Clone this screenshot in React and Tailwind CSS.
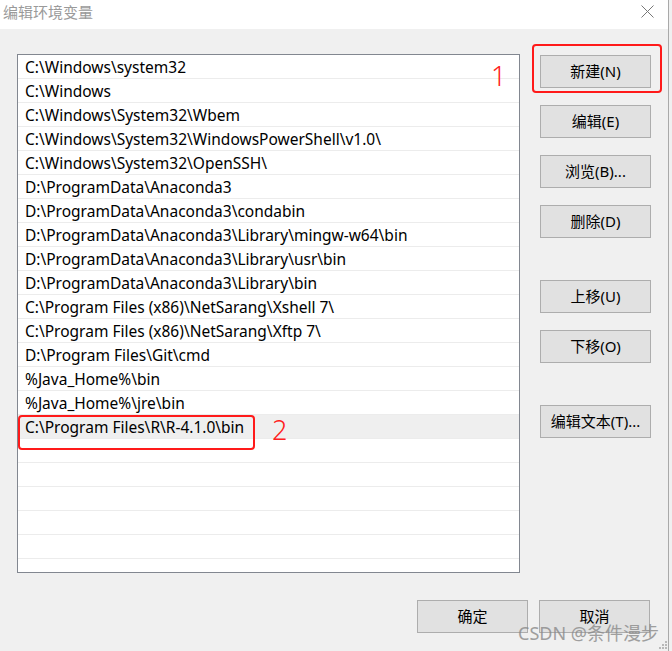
import React from "react";

const paths = [
  "C:\\Windows\\system32",
  "C:\\Windows",
  "C:\\Windows\\System32\\Wbem",
  "C:\\Windows\\System32\\WindowsPowerShell\\v1.0\\",
  "C:\\Windows\\System32\\OpenSSH\\",
  "D:\\ProgramData\\Anaconda3",
  "D:\\ProgramData\\Anaconda3\\condabin",
  "D:\\ProgramData\\Anaconda3\\Library\\mingw-w64\\bin",
  "D:\\ProgramData\\Anaconda3\\Library\\usr\\bin",
  "D:\\ProgramData\\Anaconda3\\Library\\bin",
  "C:\\Program Files (x86)\\NetSarang\\Xshell 7\\",
  "C:\\Program Files (x86)\\NetSarang\\Xftp 7\\",
  "D:\\Program Files\\Git\\cmd",
  "%Java_Home%\\bin",
  "%Java_Home%\\jre\\bin",
  "C:\\Program Files\\R\\R-4.1.0\\bin",
  "",
  "",
  "",
  "",
  "",
  "",
];

const font = {
  fontFamily: '"Noto Sans", "Noto Sans CJK SC", sans-serif',
};

function WinButton({ children, className = "" }) {
  return (
    <button
      className={`w-[111px] h-[33px] bg-[#e1e1e1] border border-[#adadad] text-[15px] text-black flex items-center justify-center ${className}`}
    >
      {children}
    </button>
  );
}

export default function App() {
  return (
    <div
      className="relative w-[672px] h-[651px] bg-[#f0f0f0] flex overflow-hidden"
      style={font}
    >
      <div className="w-[669px] h-full flex flex-col border-r border-[#a9a9a9]">
        {/* Title bar */}
        <div className="h-[29px] bg-white flex items-start justify-between shrink-0">
          <span className="pl-[3px] pt-[1px] text-[15px] leading-[22px] text-[#9a9a9a]">
            编辑环境变量
          </span>
          <svg
            className="mt-[5px] mr-[14px]"
            width="13"
            height="13"
            viewBox="0 0 13 13"
          >
            <path d="M0.5 0.5L12.5 12.5M12.5 0.5L0.5 12.5" stroke="#777" strokeWidth="1" fill="none" />
          </svg>
        </div>

        {/* Body */}
        <div className="flex pt-[25px] pl-[17px]">
          {/* List */}
          <div className="relative w-[503px] h-[519px] bg-white border border-[#828790] overflow-hidden">
            {paths.map((p, i) => (
              <div
                key={i}
                className={`h-[24px] border-b border-[#ececec] pl-[7px] pt-[2px] text-[15.5px] leading-[21px] text-black whitespace-nowrap ${
                  i === 15 ? "bg-[#efefef]" : ""
                }`}
              >
                {p}
              </div>
            ))}
            {/* annotation 2 */}
            <div className="absolute left-0 top-[360px] w-[237px] h-[35px] border-2 border-[#ff1a1a] rounded-[4px]" />
            <span className="absolute left-[254px] top-[357px] text-[27px] leading-[36px] text-[#ff2020] font-light">
              2
            </span>
            {/* annotation 1 */}
            <span className="absolute left-[473px] top-[4px] text-[27px] leading-[34px] text-[#ff2020] font-light">
              1
            </span>
          </div>

          {/* Buttons */}
          <div className="flex flex-col ml-[20px] pt-[1px]">
            <div className="relative">
              <div className="absolute -left-[8px] -top-[11px] w-[130px] h-[49px] border-2 border-[#ff1a1a] rounded-[4px]" />
              <WinButton>新建(N)</WinButton>
            </div>
            <WinButton className="mt-[17px]">编辑(E)</WinButton>
            <WinButton className="mt-[17px]">浏览(B)...</WinButton>
            <WinButton className="mt-[17px]">删除(D)</WinButton>
            <WinButton className="mt-[42px]">上移(U)</WinButton>
            <WinButton className="mt-[17px]">下移(O)</WinButton>
            <WinButton className="mt-[42px]">编辑文本(T)...</WinButton>
          </div>
        </div>

        {/* Bottom buttons */}
        <div className="flex justify-end gap-[11px] pr-[18px] mt-[27px]">
          <WinButton>确定</WinButton>
          <WinButton>取消</WinButton>
        </div>
      </div>

      {/* Watermark */}
      <span className="absolute left-[518px] top-[621px] text-[18px] leading-[25px] text-[#8a8a8a] opacity-80 whitespace-nowrap">
        CSDN @条件漫步
      </span>

      {/* Resize grip */}
      <svg className="absolute right-[4px] bottom-[1px]" width="9" height="9" viewBox="0 0 9 9">
        <rect x="6" y="0" width="2" height="2" fill="#b8b8b8" />
        <rect x="3" y="3" width="2" height="2" fill="#b8b8b8" />
        <rect x="6" y="3" width="2" height="2" fill="#b8b8b8" />
        <rect x="0" y="6" width="2" height="2" fill="#b8b8b8" />
        <rect x="3" y="6" width="2" height="2" fill="#b8b8b8" />
        <rect x="6" y="6" width="2" height="2" fill="#b8b8b8" />
      </svg>
    </div>
  );
}
